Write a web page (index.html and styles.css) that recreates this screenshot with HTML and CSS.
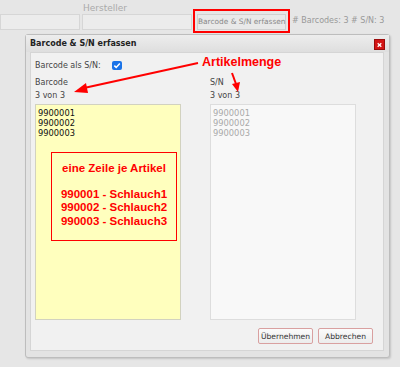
FILE: index.html
```html
<!DOCTYPE html>
<html lang="de">
<head>
    <meta charset="UTF-8">
    <title>Barcode &amp; S/N erfassen</title>
    <link rel="stylesheet" href="styles.css">
</head>
<body>
    <div class="toolbar">
        <div class="field first">
            <div class="input"></div>
        </div>
        <div class="field second">
            <div class="label">Hersteller</div>
            <div class="input"></div>
        </div>
        <div class="mark">
            <div class="btn-open">Barcode &amp; S/N erfassen</div>
        </div>
        <div class="counts"># Barcodes: 3 # S/N: 3</div>
    </div>

    <div class="dialog">
        <div class="titlebar">
            <span>Barcode &amp; S/N erfassen</span>
            <span class="close">
                <svg width="10" height="10" viewBox="0 0 10 10">
                    <path d="M3 3 L7 7 M7 3 L3 7" stroke="#fff" stroke-width="1.4"/>
                </svg>
            </span>
        </div>
        <div class="panel">
            <div class="option">
                <span>Barcode als S/N:</span>
                <span class="check">
                    <svg width="10" height="9" viewBox="0 0 10 9">
                        <path d="M2.3 4.6 L4.2 6.4 L7.8 2.6" stroke="#fff" stroke-width="1.5" fill="none"/>
                    </svg>
                </span>
            </div>
            <div class="columns">
                <div class="column">
                    <div class="col-label">Barcode</div>
                    <div class="col-label">3 von 3</div>
                    <div class="area barcodes">
                        <div>9900001</div>
                        <div>9900002</div>
                        <div>9900003</div>
                        <div class="note">
                            <div>eine Zeile je Artikel</div>
                            <div class="note-gap"></div>
                            <div>990001 - Schlauch1</div>
                            <div>990002 - Schlauch2</div>
                            <div>990003 - Schlauch3</div>
                        </div>
                    </div>
                </div>
                <div class="column">
                    <div class="col-label">S/N</div>
                    <div class="col-label">3 von 3</div>
                    <div class="area serials">
                        <div>9900001</div>
                        <div>9900002</div>
                        <div>9900003</div>
                    </div>
                </div>
            </div>
            <div class="actions">
                <button class="btn">Übernehmen</button>
                <button class="btn">Abbrechen</button>
            </div>
        </div>
    </div>

    <div class="callout">Artikelmenge</div>
    <svg class="arrows" width="400" height="367" viewBox="0 0 400 367">
        <path d="M198 63 L84 88" stroke="#f00" stroke-width="2"/>
        <path d="M74 92 L86 83 L88 93 Z" fill="#f00"/>
        <path d="M232 73 L236 84" stroke="#f00" stroke-width="2"/>
        <path d="M238 92 L232 84 L240 82 Z" fill="#f00"/>
    </svg>
</body>
</html>
```

FILE: styles.css
```css
* {
    margin: 0;
    padding: 0;
    box-sizing: border-box;
}

body {
    width: 400px;
    height: 367px;
    background-color: #e6e6e6;
    font-family: "DejaVu Sans", Verdana, sans-serif;
    font-size: 8px;
    color: #333;
    position: relative;
    overflow: hidden;
}

.toolbar {
    display: flex;
    align-items: flex-end;
    padding-top: 3px;
}

.field {
    display: flex;
    flex-direction: column;
    margin-right: 2px;
}

.field.first {
    width: 80px;
}

.field.second {
    width: 110px;
    margin-right: 0;
}

.label {
    color: #aaa;
    font-size: 9px;
    height: 11px;
    line-height: 11px;
    padding-left: 1px;
}

.input {
    height: 16px;
    margin-bottom: 3px;
    background-color: #ececec;
    border: 1px solid #d6d6d6;
}

.mark {
    width: 97px;
    height: 24px;
    border: 2px solid #f00;
    padding: 3px 2px;
    margin-left: 1px;
}

.btn-open {
    height: 16px;
    line-height: 14px;
    border: 1px solid #d0d0d0;
    background-color: #e9e9e9;
    color: #888;
    font-size: 7.4px;
    text-align: center;
    white-space: nowrap;
}

.counts {
    color: #999;
    font-size: 8px;
    padding: 0 0 8px 2px;
    white-space: nowrap;
}

.dialog {
    position: absolute;
    left: 25px;
    top: 34px;
    width: 365px;
    height: 324px;
    background-color: #e3e3e3;
    border: 1px solid #bdbdbd;
    border-radius: 3px;
    box-shadow: 1px 1px 2px rgba(0, 0, 0, 0.15);
    display: flex;
    flex-direction: column;
}

.titlebar {
    height: 17px;
    display: flex;
    align-items: center;
    justify-content: space-between;
    padding: 0 4px;
    font-weight: bold;
    color: #222;
    background: linear-gradient(#ededed, #dedede);
}

.close {
    width: 11px;
    height: 11px;
    background-color: #d31515;
    border: 1px solid #9a0c0c;
    display: flex;
    align-items: center;
    justify-content: center;
    margin-top: 2px;
}

.close svg {
    display: block;
}

.panel {
    flex-grow: 1;
    margin: 0 5px 6px 4px;
    background-color: #f1f1f1;
    border: 1px solid #d5d5d5;
    padding: 7px 10px 6px 4px;
    display: flex;
    flex-direction: column;
}

.option {
    display: flex;
    align-items: center;
    gap: 11px;
    color: #444;
    height: 10px;
}

.check {
    width: 10px;
    height: 9px;
    background-color: #1a73e8;
    border-radius: 2px;
    display: flex;
}

.columns {
    display: flex;
    gap: 29px;
    margin-top: 6px;
}

.column {
    width: 146px;
    display: flex;
    flex-direction: column;
}

.col-label {
    height: 13px;
    line-height: 13px;
    color: #444;
}

.area {
    height: 216px;
    margin-top: 2px;
    padding: 3px 2px;
    font-size: 8.3px;
    line-height: 10px;
    position: relative;
}

.barcodes {
    background-color: #ffffbe;
    border: 1px solid #d2d2c0;
    color: #111;
}

.serials {
    background-color: #f8f8f8;
    border: 1px solid #dddddd;
    color: #aaa;
}

.note {
    position: absolute;
    left: 15px;
    top: 47px;
    width: 126px;
    height: 89px;
    border: 1px solid #f00;
    color: #f00;
    font-family: "Liberation Sans", Arial, sans-serif;
    font-weight: bold;
    font-size: 11.5px;
    line-height: 13.5px;
    text-align: center;
    padding-top: 9px;
}

.note-gap {
    height: 12px;
}

.actions {
    display: flex;
    justify-content: flex-end;
    gap: 5px;
    margin-top: auto;
}

.btn {
    width: 55px;
    height: 16px;
    background: linear-gradient(#fbfbfb, #ececec);
    border: 1px solid #d9a0a0;
    border-radius: 2px;
    font-family: "DejaVu Sans", Verdana, sans-serif;
    font-size: 7.6px;
    color: #333;
}

.callout {
    position: absolute;
    left: 202px;
    top: 55px;
    color: #f00;
    font-family: "Liberation Sans", Arial, sans-serif;
    font-weight: bold;
    font-size: 12.5px;
}

.arrows {
    position: absolute;
    left: 0;
    top: 0;
    pointer-events: none;
}
```
